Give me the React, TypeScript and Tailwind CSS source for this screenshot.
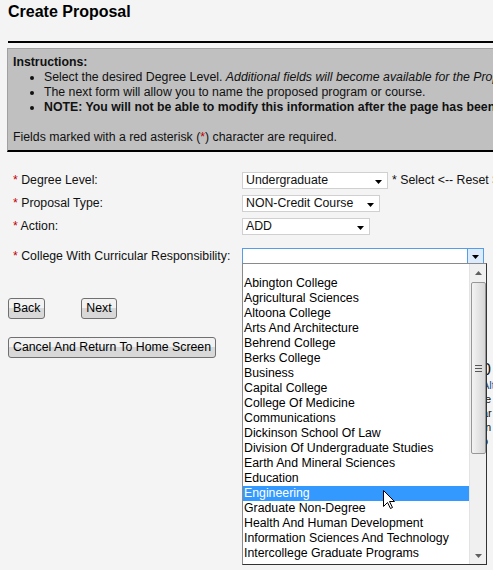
import * as React from "react";

const colleges = [
  "Abington College",
  "Agricultural Sciences",
  "Altoona College",
  "Arts And Architecture",
  "Behrend College",
  "Berks College",
  "Business",
  "Capital College",
  "College Of Medicine",
  "Communications",
  "Dickinson School Of Law",
  "Division Of Undergraduate Studies",
  "Earth And Mineral Sciences",
  "Education",
  "Engineering",
  "Graduate Non-Degree",
  "Health And Human Development",
  "Information Sciences And Technology",
  "Intercollege Graduate Programs",
];

const Arrow = () => (
  <svg width="7" height="4" viewBox="0 0 7 4" className="shrink-0">
    <path d="M0 0h7L3.5 4z" fill="#000" />
  </svg>
);

const Select: React.FC<{ value: string; width: string }> = ({ value, width }) => (
  <div
    className={`${width} h-[17px] bg-white border border-[#d0d0d0] flex items-center justify-between pl-[3px] pr-[5px] leading-none`}
  >
    <span>{value}</span>
    <span className="mt-[3px]">
      <Arrow />
    </span>
  </div>
);

const Row: React.FC<{ label: string; children: React.ReactNode; className?: string }> = ({
  label,
  children,
  className,
}) => (
  <div className={`flex items-center h-[17px] ${className ?? ""}`}>
    <span className="w-[229px] shrink-0 whitespace-nowrap">
      <span className="text-[#c00000]">*</span> {label}
    </span>
    {children}
  </div>
);

const Button: React.FC<{ children: React.ReactNode; className?: string }> = ({
  children,
  className,
}) => (
  <button
    className={`h-[21px] px-[4px] border border-[#707070] rounded-[3px] bg-gradient-to-b from-[#f2f2f2] from-50% to-[#d8d8d8] to-50% text-[12.3px] leading-none text-black ${className ?? ""}`}
  >
    {children}
  </button>
);

export default function App() {
  return (
    <div className="relative w-[493px] h-[570px] overflow-hidden bg-[#f4f4f4] font-['Liberation_Sans',Arial,sans-serif] text-[12.3px] text-[#111]">
      <div className="pl-[8px] w-[700px]">
        <h1 className="text-[16px] font-bold leading-[19px] pt-[2px] text-black">Create Proposal</h1>
        <div className="mt-[20px] border-t-2 border-black" />

        {/* instructions box */}
        <div className="mt-[5px] ml-[-1px] bg-[#c0c0c0] border border-[#a0a0a0] border-b-2 border-b-black pl-[5px] pt-[6px] pb-[5px] leading-[15px]">
          <div className="font-bold">Instructions:</div>
          <ul className="list-disc pl-[31px]">
            <li>
              Select the desired Degree Level.{" "}
              <i>Additional fields will become available for the Proposal Type and Action.</i>
            </li>
            <li>The next form will allow you to name the proposed program or course.</li>
            <li className="font-bold">
              NOTE: You will not be able to modify this information after the page has been submitted.
            </li>
          </ul>
          <div className="h-[15px]" />
          <div>
            Fields marked with a red asterisk (<span className="text-[#c00000]">*</span>) character are
            required.
          </div>
        </div>

        {/* form rows */}
        <div className="mt-[20px] pl-[5px] flex flex-col">
          <Row label="Degree Level:">
            <Select value="Undergraduate" width="w-[146px]" />
            <span className="ml-[4px] whitespace-nowrap">* Select &lt;-- Reset Selections</span>
          </Row>
          <Row label="Proposal Type:" className="mt-[6px]">
            <Select value="NON-Credit Course" width="w-[138px]" />
          </Row>
          <Row label="Action:" className="mt-[6px]">
            <Select value="ADD" width="w-[128px]" />
          </Row>
          <Row label="College With Curricular Responsibility:" className="mt-[13px]">
            <div className="w-[242px] h-[17px] bg-white border border-[#569de5] flex justify-end">
              <div className="w-[16px] h-full bg-[#dcecfc] border-l border-[#569de5] flex items-center justify-center">
                <Arrow />
              </div>
            </div>
          </Row>
        </div>

        {/* buttons + right side content */}
        <div className="flex mt-[33px]">
          <div className="w-[474px]">
            <div className="flex gap-[36px]">
              <Button>Back</Button>
              <Button>Next</Button>
            </div>
            <Button className="mt-[18px]">Cancel And Return To Home Screen</Button>
          </div>
          <div className="pt-[64px] text-[11px] leading-[14px]">
            <div className="text-[16px] leading-[16px] text-[#111]">0</div>
            <div className="text-[#1d4f91]">Alt</div>
            <div>te</div>
            <div>ar</div>
            <div>m</div>
            <div>o</div>
          </div>
        </div>
      </div>

      {/* open dropdown list */}
      <div className="absolute left-[242px] top-[263px] w-[245px] h-[302px] bg-white border border-[#8a8a8a] border-r-[#333] border-b-[#333] flex overflow-hidden">
        <div className="flex-1 leading-[15px]">
          <div className="h-[12px]" />
          {colleges.map((c) => (
            <div
              key={c}
              className={`h-[15px] pl-[1px] whitespace-nowrap ${c === "Engineering" ? "bg-[#3399ff] text-white" : "text-black"}`}
            >
              {c}
            </div>
          ))}
        </div>
        {/* scrollbar */}
        <div className="w-[17px] bg-[#f0f0f0] border-l border-[#e3e3e3] flex flex-col items-center">
          <div className="h-[17px] flex items-center justify-center">
            <svg width="7" height="4" viewBox="0 0 7 4">
              <path d="M0 4h7L3.5 0z" fill="#606060" />
            </svg>
          </div>
          <div className="w-[15px] h-[172px] mt-[1px] rounded-[2px] border border-[#979797] bg-gradient-to-r from-[#f3f3f3] to-[#d6d6d6] flex items-center justify-center">
            <svg width="7" height="7" viewBox="0 0 7 7">
              <path d="M0 0.5h7M0 3.5h7M0 6.5h7" stroke="#555" strokeWidth="1" />
            </svg>
          </div>
          <div className="flex-1" />
          <div className="h-[17px] flex items-center justify-center">
            <svg width="7" height="4" viewBox="0 0 7 4">
              <path d="M0 0h7L3.5 4z" fill="#606060" />
            </svg>
          </div>
        </div>
      </div>

      {/* mouse pointer */}
      <svg
        className="absolute left-[383px] top-[490px]"
        width="13"
        height="20"
        viewBox="0 0 13 20"
      >
        <path
          d="M0.5 0.5V16.5L4.5 12.5L7.5 18.5L9.5 17.5L6.5 11.5H11.5Z"
          fill="#fff"
          stroke="#000"
          strokeWidth="1"
          strokeLinejoin="miter"
        />
      </svg>
    </div>
  );
}
